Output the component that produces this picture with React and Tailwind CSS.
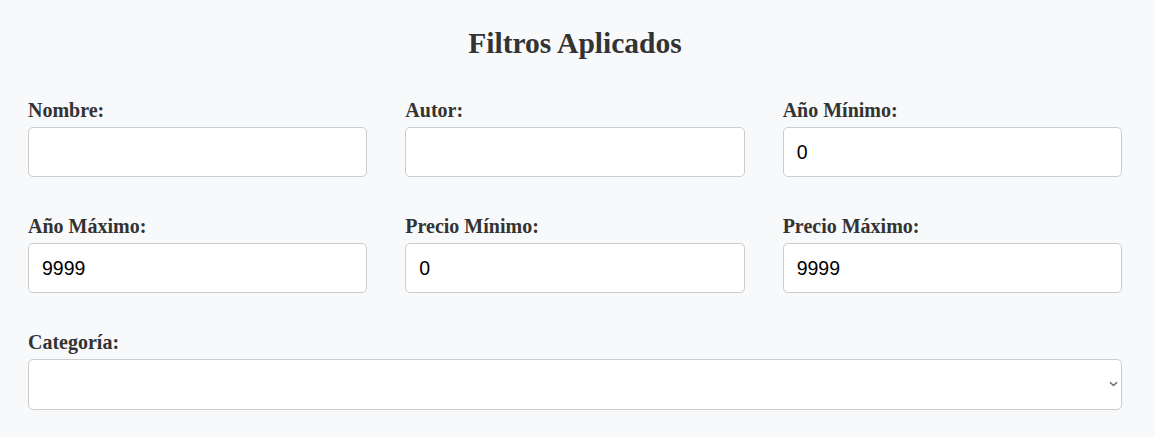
import { useState } from 'react'

const serif = { fontFamily: '"Liberation Serif", "Times New Roman", serif' }

function Field({ label, value, onChange }) {
  return (
    <div className="flex flex-col">
      <label className="text-[20px] leading-[22px] font-bold text-[#333] mb-[6px]" style={serif}>{label}</label>
      <input
        value={value}
        onChange={e => onChange(e.target.value)}
        className="h-[50px] w-full rounded-[5px] border border-[#cccccc] bg-white px-[13px] text-[19.5px] text-black outline-none font-['Liberation_Sans',Arial,sans-serif]"
      />
    </div>
  )
}

export default function App() {
  const [f, setF] = useState({
    nombre: '', autor: '', anioMin: '0', anioMax: '9999', precioMin: '0', precioMax: '9999', categoria: '',
  })
  const set = k => v => setF(prev => ({ ...prev, [k]: v }))

  return (
    <div className="min-h-[437px] bg-[#f8f9fa] pt-[26px] pb-[27px] pl-[28px] pr-[33px]">
      <h2 className="text-center text-[29.5px] leading-[34px] font-bold text-[#333] mb-[39px]" style={serif}>
        Filtros Aplicados
      </h2>

      <div className="grid grid-cols-3 gap-x-[38px] gap-y-[38px]">
        <Field label="Nombre:" value={f.nombre} onChange={set('nombre')} />
        <Field label="Autor:" value={f.autor} onChange={set('autor')} />
        <Field label="Año Mínimo:" value={f.anioMin} onChange={set('anioMin')} />
        <Field label="Año Máximo:" value={f.anioMax} onChange={set('anioMax')} />
        <Field label="Precio Mínimo:" value={f.precioMin} onChange={set('precioMin')} />
        <Field label="Precio Máximo:" value={f.precioMax} onChange={set('precioMax')} />

        <div className="col-span-3 flex flex-col">
          <label className="text-[20px] leading-[22px] font-bold text-[#333] mb-[6px]" style={serif}>Categoría:</label>
          <div className="relative">
            <select
              value={f.categoria}
              onChange={e => set('categoria')(e.target.value)}
              className="block h-[51px] w-full appearance-none rounded-[5px] border border-[#cccccc] bg-white px-[13px] text-[19.5px] text-black outline-none font-['Liberation_Sans',Arial,sans-serif]"
            >
              <option value=""></option>
              <option value="novela">Novela</option>
              <option value="ciencia">Ciencia</option>
              <option value="historia">Historia</option>
            </select>
            <svg
              className="pointer-events-none absolute right-[4px] top-[22px]"
              width="9" height="6" viewBox="0 0 9 6" fill="none"
            >
              <path d="M1 1.2 L4.5 4.5 L8 1.2" stroke="#6b6b6b" strokeWidth="1.5" />
            </svg>
          </div>
        </div>
      </div>
    </div>
  )
}
